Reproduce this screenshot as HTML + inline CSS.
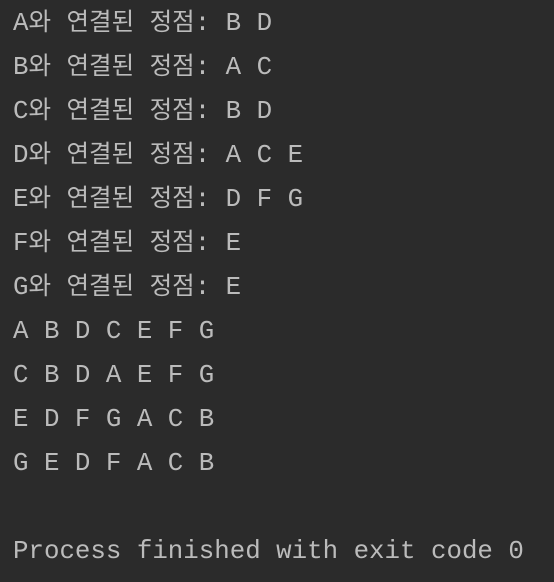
<!DOCTYPE html>
<html><head><meta charset="utf-8"><style>
html,body{margin:0;padding:0;background:#2b2b2b;width:554px;height:582px;overflow:hidden}
.c{position:absolute;left:13px;top:2px;font-family:"Liberation Mono",monospace;font-size:25.8px;color:#bbbbbb}
.l{height:44px;line-height:44px;overflow:hidden;white-space:pre}
.k{font-family:"Noto Sans CJK KR","NanumGothic",sans-serif;font-size:24.5px;line-height:20px;display:inline-block;vertical-align:baseline}
</style></head><body><div class="c"><div class="l">A<span class="k">와</span> <span class="k">연결된</span> <span class="k">정점</span>: B D</div><div class="l">B<span class="k">와</span> <span class="k">연결된</span> <span class="k">정점</span>: A C</div><div class="l">C<span class="k">와</span> <span class="k">연결된</span> <span class="k">정점</span>: B D</div><div class="l">D<span class="k">와</span> <span class="k">연결된</span> <span class="k">정점</span>: A C E</div><div class="l">E<span class="k">와</span> <span class="k">연결된</span> <span class="k">정점</span>: D F G</div><div class="l">F<span class="k">와</span> <span class="k">연결된</span> <span class="k">정점</span>: E</div><div class="l">G<span class="k">와</span> <span class="k">연결된</span> <span class="k">정점</span>: E</div><div class="l">A B D C E F G</div><div class="l">C B D A E F G</div><div class="l">E D F G A C B</div><div class="l">G E D F A C B</div><div class="l"> </div><div class="l">Process finished with exit code 0</div></div></body></html>
